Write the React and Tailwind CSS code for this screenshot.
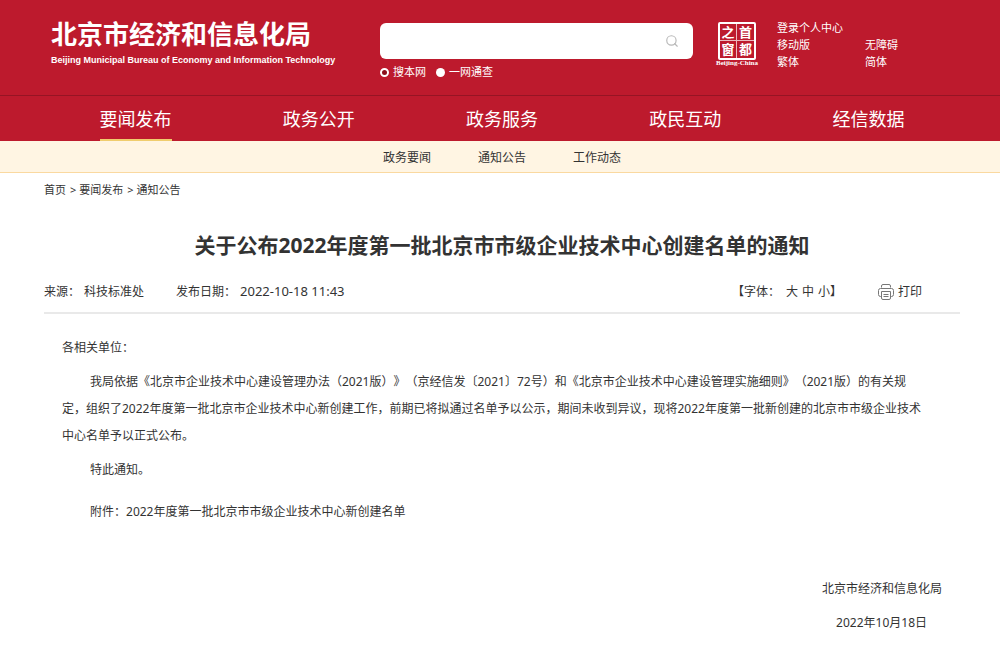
import { Search } from "lucide-react";

const navItems = ["要闻发布", "政务公开", "政务服务", "政民互动", "经信数据"];
const subItems = ["政务要闻", "通知公告", "工作动态"];
const crumbs = ["首页", "要闻发布", "通知公告"];

function CapitalSeal() {
  return (
    <a href="#" className="flex w-[42px] flex-col items-center text-white">
      <span className="grid size-[38px] grid-cols-2 grid-rows-2 rounded-xs border-2 border-white text-[13px]/4 font-bold">
        <span className="border-r border-b border-white/70 text-center">之</span>
        <span className="border-b border-white/70 text-center">首</span>
        <span className="border-r border-white/70 text-center">窗</span>
        <span className="text-center">都</span>
      </span>
      <span className="font-['Liberation_Serif',serif] text-[7px]/[7px] font-bold whitespace-nowrap">Beijing-China</span>
    </a>
  );
}

function PrinterIcon() {
  return (
    <svg viewBox="0 0 16 16" className="size-4" fill="none" stroke="#777" aria-hidden="true">
      <path d="M3.5 3.5V2Q3.5.5 5 .5h6q1.5 0 1.5 1.5v1.5" />
      <path d="M3.5 12.5h-1q-2 0-2-2v-4q0-2 2-2h11q2 0 2 2v4q0 2-2 2h-1" />
      <path d="M3.5 7.5h9V14q0 1.5-1.5 1.5H5Q3.5 15.5 3.5 14z" />
      <path d="M5.5 10.5h5M5.5 12.5h5" />
    </svg>
  );
}

function SearchBox() {
  return (
    <form className="w-[313px]" onSubmit={(e) => e.preventDefault()}>
      <div className="flex h-9 items-center rounded-md bg-white pr-3.5">
        <input type="text" aria-label="搜索" className="h-full min-w-0 flex-1 px-3 text-xs text-[#333] outline-none" />
        <button type="submit" aria-label="搜索">
          <Search className="size-3.5 text-[#b8b8b8]" />
        </button>
      </div>
      <div className="mt-[5px] flex gap-2.5 text-[11px]/4 text-white">
        <label className="flex items-center gap-1">
          <input
            type="radio"
            name="scope"
            defaultChecked
            className="size-[9px] appearance-none rounded-full bg-white checked:border-2 checked:border-white checked:bg-[#8c0f1c]"
          />
          搜本网
        </label>
        <label className="flex items-center gap-1">
          <input
            type="radio"
            name="scope"
            className="size-[9px] appearance-none rounded-full bg-white checked:border-2 checked:border-white checked:bg-[#8c0f1c]"
          />
          一网通查
        </label>
      </div>
    </form>
  );
}

function Header() {
  return (
    <header className="bg-[#bd1a2d] text-white">
      <div className="flex h-[95px] items-start pt-[18px] pr-10 pl-[51px]">
        <div className="w-[329px]">
          <div className="text-[26px]/8 font-bold">北京市经济和信息化局</div>
          <div className="mt-1 font-['Liberation_Sans',Arial,sans-serif] text-[9px]/3 font-bold whitespace-nowrap">
            Beijing Municipal Bureau of Economy and Information Technology
          </div>
        </div>
        <div className="pt-[5px]">
          <SearchBox />
        </div>
        <div className="flex gap-[19px] pt-1 pl-[23px]">
          <CapitalSeal />
          <div className="-mt-[3px] grid grid-cols-[88px_auto] content-start text-[11px]/[17px] whitespace-nowrap">
            <a href="#" className="col-span-2">登录个人中心</a>
            <a href="#">移动版</a>
            <a href="#">无障碍</a>
            <a href="#">繁体</a>
            <a href="#">简体</a>
          </div>
        </div>
      </div>
      <nav className="border-t border-[#961424] pr-10 pl-11">
        <ul className="grid grid-cols-5 text-lg/10">
          {navItems.map((item, i) => (
            <li key={item} className="flex justify-center">
              <a
                href="#"
                className={i === 0 ? "border-b-2 border-[#f0cd6e] pt-[3px]" : "border-b-2 border-transparent pt-[3px]"}
              >
                {item}
              </a>
            </li>
          ))}
        </ul>
      </nav>
    </header>
  );
}

function SubNav() {
  return (
    <nav className="border-b border-[#fad9a0] bg-[#fff5e3] pl-1">
      <ul className="flex justify-center gap-[47px] pt-[3px] text-xs/7">
        {subItems.map((item) => (
          <li key={item}>
            <a href="#">{item}</a>
          </li>
        ))}
      </ul>
    </nav>
  );
}

function ArticleMeta() {
  return (
    <div className="flex items-center justify-between border-b-2 border-[#e9e9e9] pr-[38px] pb-2.5 text-xs/5">
      <div className="flex items-baseline gap-8">
        <span className="flex gap-1">
          <span>来源：</span>
          <span>科技标准处</span>
        </span>
        <span className="flex items-baseline gap-1">
          <span>发布日期：</span>
          <time className="text-[13px]/5">2022-10-18 11:43</time>
        </span>
      </div>
      <div className="flex items-center gap-9">
        <div className="flex">
          【字体：
          <span className="flex gap-1 pl-1.5">
            <button type="button">大</button>
            <button type="button">中</button>
            <button type="button">小</button>
          </span>
          】
        </div>
        <button type="button" className="flex items-center gap-1">
          <PrinterIcon />
          打印
        </button>
      </div>
    </div>
  );
}

export default function App() {
  return (
    <div
      lang="zh-CN"
      className="min-h-screen bg-white font-['Noto_Sans','Noto_Sans_CJK_SC',sans-serif] text-[#333] [text-spacing-trim:space-all]"
    >
      <Header />
      <SubNav />
      <main className="pr-10 pl-11">
        <div className="flex gap-1 pt-2 text-[11px]/[18px]">
          {crumbs.map((c, i) => (
            <span key={c} className="flex gap-[3px]">
              {i > 0 && <span>&gt;</span>}
              <a href="#">{c}</a>
            </span>
          ))}
        </div>
        <article>
          <h1 className="pt-[30px] pb-5 text-center text-[21px]/8 font-bold">
            关于公布2022年度第一批北京市市级企业技术中心创建名单的通知
          </h1>
          <ArticleMeta />
          <div className="pt-5 pr-8 pl-[18px] text-xs/[27px]">
            <p>各相关单位：</p>
            <p className="mt-[7px] indent-7">
              我局依据《北京市企业技术中心建设管理办法（2021版）》（京经信发〔2021〕72号）和《北京市企业技术中心建设管理实施细则》（2021版）的有关规定，组织了2022年度第一批北京市企业技术中心新创建工作，前期已将拟通过名单予以公示，期间未收到异议，现将2022年度第一批新创建的北京市市级企业技术中心名单予以正式公布。
            </p>
            <p className="mt-[7px] indent-7">特此通知。</p>
            <p className="mt-[15px] indent-7">
              附件：<a href="#">2022年度第一批北京市市级企业技术中心新创建名单</a>
            </p>
          </div>
          <div className="pt-[50px] pr-[18px] text-right text-xs/[27px]">
            <p>北京市经济和信息化局</p>
            <p className="mt-[7px] pr-[15px]">2022年10月18日</p>
          </div>
        </article>
      </main>
    </div>
  );
}
